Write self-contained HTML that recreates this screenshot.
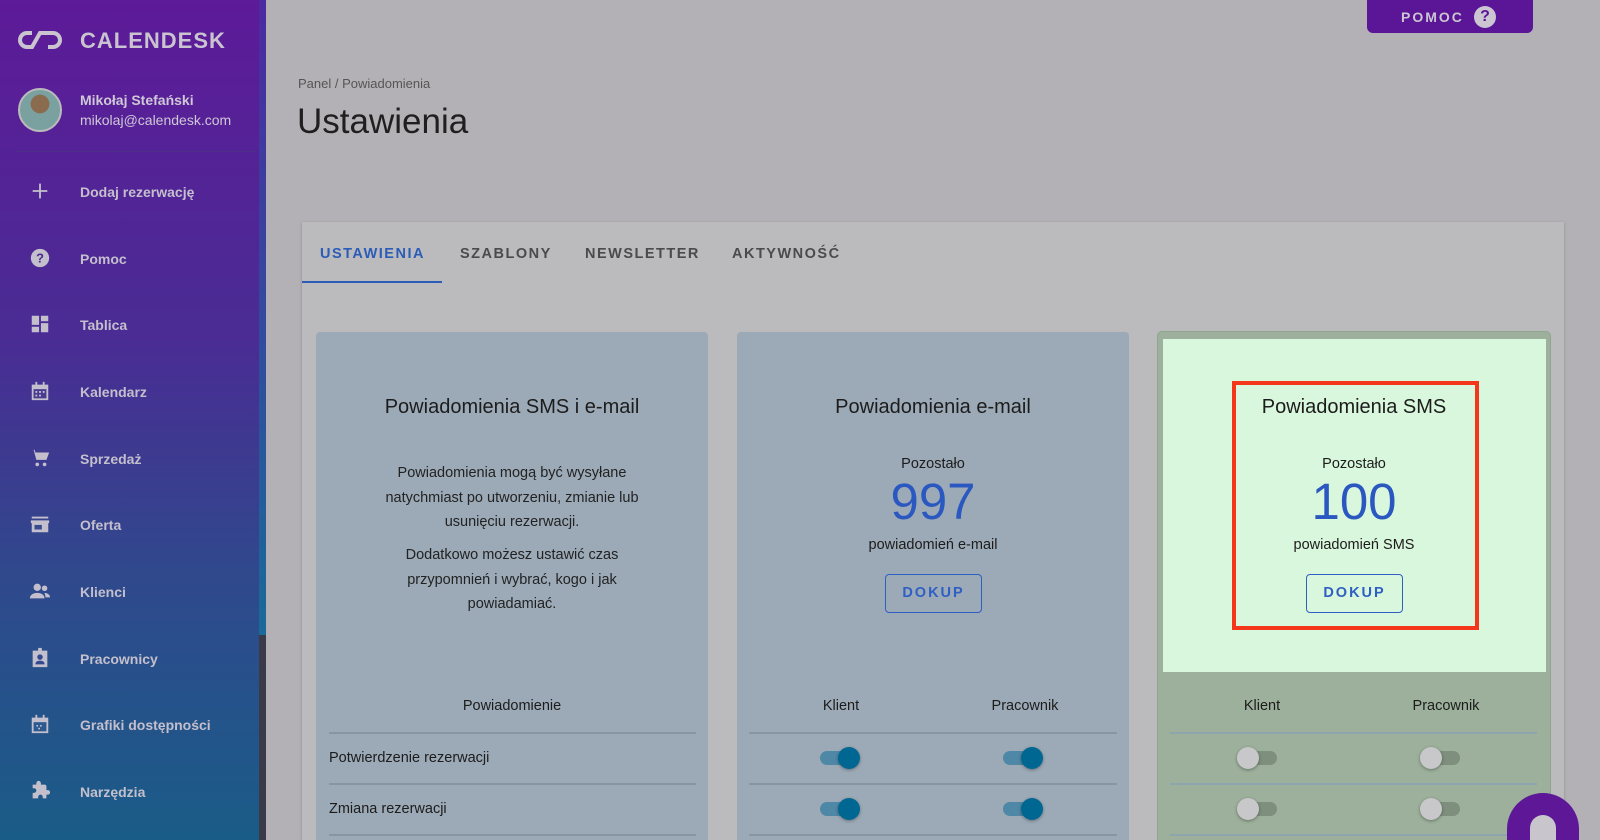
<!DOCTYPE html>
<html style="width:1600px;height:840px;overflow:hidden"><head><meta charset="utf-8"><style>
*{box-sizing:border-box;margin:0;padding:0}
body{width:1600px;height:840px;overflow:hidden;background:#b3b1b5;font-family:"Liberation Sans",sans-serif;position:relative}
.sb{position:absolute;left:0;top:0;width:259px;height:840px;background:linear-gradient(180deg,#5d1a99 0%,#4a2c94 40%,#2e4a8c 70%,#1a5c88 100%)}
.strip{position:absolute;left:259px;top:0;width:7px;height:840px;background:#3a3a48}
.strip i{position:absolute;left:0;top:0;width:7px;height:635px;background:linear-gradient(180deg,#4c2aa0,#1a6a9a)}
.logo{position:absolute;left:80px;top:28px;color:#c9c4cf;font-weight:bold;font-size:22px;letter-spacing:1px}
.av{position:absolute;left:18px;top:88px;width:44px;height:44px;border-radius:50%;background:radial-gradient(circle at 50% 35%,#8a6b4e 0 28%,#7aa0a0 29% 100%);border:2px solid #bbb}
.nm{position:absolute;left:80px;top:92px;color:#cfc8d6;font-size:14px;font-weight:bold}
.em{position:absolute;left:80px;top:112px;color:#cfc8d6;font-size:14px}
.hr{position:absolute;left:16px;top:151px;width:240px;height:1px;background:#4e2f86}
.mi{position:absolute;left:80px;color:#c4bfcc;font-size:14px;font-weight:bold}
.ic{position:absolute;left:29px;width:22px;height:22px}
.pom{position:absolute;left:1367px;top:0;width:166px;height:33px;background:#5a1696;border-radius:0 0 6px 6px;color:#cbc6d2;font-weight:bold;font-size:14px;letter-spacing:2px;padding:9px 0 0 34px}
.pom b{position:absolute;left:107px;top:6px;width:22px;height:22px;border-radius:50%;background:#cbc6d2;color:#5a1696;font-size:16px;text-align:center;line-height:22px;letter-spacing:0}
.bc{position:absolute;left:298px;top:76px;font-size:13px;color:#555}
.tt{position:absolute;left:297px;top:102px;font-size:35px;color:#1f1f1f}
.box{position:absolute;left:302px;top:222px;width:1262px;height:618px;background:#bbbabd;box-shadow:0 1px 3px rgba(0,0,0,.2)}
.tab{position:absolute;top:246px;font-size:14.5px;font-weight:bold;letter-spacing:1.5px;color:#4b4b4f}
.ul{position:absolute;left:302px;top:281px;width:140px;height:2px;background:#2a5cb8}
.card{position:absolute;top:332px;width:392px;height:508px;background:#9caab7;border-radius:4px 4px 0 0}
.c{position:absolute;text-align:center;color:#1c1c1c}
.h{font-size:20px}
.p{font-size:14.5px;line-height:24.5px;color:#222}
.big{font-size:51px;color:#2a58c0}
.btn{position:absolute;width:97px;height:39px;border:1.5px solid #2f5fc4;border-radius:4px;color:#2f5fc4;font-weight:bold;font-size:14.5px;letter-spacing:2px;text-align:center;line-height:37px}
.line{position:absolute;height:2px;background:#8896a4}
.tg{position:absolute;width:42px;height:16px}
.tg i{position:absolute;left:2px;top:1px;width:38px;height:14px;border-radius:7px}
.tg b{position:absolute;top:-3px;width:22px;height:22px;border-radius:50%;box-shadow:0 1px 3px rgba(0,0,0,.35)}
.on i{background:#4f88a6}.on b{left:20px;background:#006792}
.off i{background:#7e8f7d}.off b{left:0;background:#c8c8ca}
</style></head><body>
<div class="sb"></div><div class="strip"><i></i></div>
<svg style="position:absolute;left:18px;top:30px" width="44" height="20" viewBox="0 0 44 20"><path d="M14 3H9a7 7 0 0 0 0 14h5l8-14h13a7 7 0 0 1 0 14h-5" fill="none" stroke="#c9c4cf" stroke-width="4"/></svg>
<div class="logo">CALENDESK</div>
<div class="av"></div>
<div class="nm">Mikołaj Stefański</div><div class="em">mikolaj@calendesk.com</div>
<div class="hr"></div>
<div class="mi" style="top:184px">Dodaj rezerwację</div>
<div class="mi" style="top:251px">Pomoc</div>
<div class="mi" style="top:317px">Tablica</div>
<div class="mi" style="top:384px">Kalendarz</div>
<div class="mi" style="top:451px">Sprzedaż</div>
<div class="mi" style="top:517px">Oferta</div>
<div class="mi" style="top:584px">Klienci</div>
<div class="mi" style="top:651px">Pracownicy</div>
<div class="mi" style="top:717px">Grafiki dostępności</div>
<div class="mi" style="top:784px">Narzędzia</div>
<svg class="ic" style="top:180px" viewBox="0 0 24 24"><path d="M12 4v16M4 12h16" stroke="#c4bfcc" stroke-width="2"/></svg>
<svg class="ic" style="top:247px" viewBox="0 0 24 24"><circle cx="12" cy="12" r="10" fill="#c4bfcc"/><text x="12" y="17" font-size="14" font-weight="bold" text-anchor="middle" fill="#4a2a90" font-family="Liberation Sans">?</text></svg>
<svg class="ic" style="top:313px" viewBox="0 0 24 24" fill="#c4bfcc"><path d="M3 3h8v10H3zM13 3h8v6h-8zM13 11h8v10h-8zM3 15h8v6H3z"/></svg>
<svg class="ic" style="top:380px" viewBox="0 0 24 24" fill="#c4bfcc"><path d="M3 5h18v17H3zM7 2h2v4H7zM15 2h2v4h-2z"/><path d="M5 10h14v10H5z" fill="#4a3a90"/><path d="M7 12h2v2H7zM11 12h2v2h-2zM15 12h2v2h-2zM7 16h2v2H7zM11 16h2v2h-2z"/></svg>
<svg class="ic" style="top:447px" viewBox="0 0 24 24" fill="#c4bfcc"><path d="M1 3h4l3 11h11l3-8H7L6 3z"/><circle cx="9" cy="19" r="2"/><circle cx="17" cy="19" r="2"/></svg>
<svg class="ic" style="top:513px" viewBox="0 0 24 24" fill="#c4bfcc"><path d="M3 4h18v2H3zM2 8h20v3H2zM3 11h18v10H3z"/><path d="M6 13h8v5H6z" fill="#3a4a90"/></svg>
<svg class="ic" style="top:580px" viewBox="0 0 24 24" fill="#c4bfcc"><circle cx="9" cy="8" r="4"/><circle cx="17" cy="9" r="3"/><path d="M1 20c0-4 4-6 8-6s8 2 8 6zM17 14c3 0 6 2 6 5h-5c0-2-1-4-1-5z"/></svg>
<svg class="ic" style="top:647px" viewBox="0 0 24 24" fill="#c4bfcc"><path d="M4 4h16v18H4z"/><circle cx="12" cy="11" r="3" fill="#344890"/><path d="M7 19c0-3 2-4 5-4s5 1 5 4z" fill="#344890"/><path d="M10 1h4v5h-4z"/></svg>
<svg class="ic" style="top:713px" viewBox="0 0 24 24" fill="#c4bfcc"><path d="M3 5h18v17H3zM7 2h2v4H7zM15 2h2v4h-2z"/><path d="M5 10h14v10H5z" fill="#2a5a90"/><circle cx="9" cy="14" r="1"/><circle cx="13" cy="14" r="1"/><circle cx="11" cy="17" r="1"/></svg>
<svg class="ic" style="top:780px" viewBox="0 0 24 24" fill="#c4bfcc"><path d="M20.5 11H19V7a2 2 0 0 0-2-2h-4V3.5a2.5 2.5 0 0 0-5 0V5H4v4h1.5a2.5 2.5 0 0 1 0 5H4v6h6v-1.5a2.5 2.5 0 0 1 5 0V20h4v-4h1.5a2.5 2.5 0 0 0 0-5z"/></svg>

<div class="pom">POMOC<b>?</b></div>
<div class="bc">Panel / Powiadomienia</div>
<div class="tt">Ustawienia</div>
<div class="box"></div>
<div class="tab" style="left:320px;color:#2a5cb8">USTAWIENIA</div>
<div class="tab" style="left:460px">SZABLONY</div>
<div class="tab" style="left:585px">NEWSLETTER</div>
<div class="tab" style="left:732px">AKTYWNOŚĆ</div>
<div class="ul"></div>

<div class="card" style="left:316px"></div>
<div class="card" style="left:737px"></div>
<div class="card" style="left:1158px;background:#9cb09b;box-shadow:0 0 0 1px #8fa58f"></div>
<div style="position:absolute;left:1163px;top:339px;width:383px;height:333px;background:#d9f7dc"></div>

<div class="c h" style="left:316px;width:392px;top:396px">Powiadomienia SMS i e-mail</div>
<div class="c p" style="left:316px;width:392px;top:461px">Powiadomienia mogą być wysyłane<br>natychmiast po utworzeniu, zmianie lub<br>usunięciu rezerwacji.</div>
<div class="c p" style="left:316px;width:392px;top:543px">Dodatkowo możesz ustawić czas<br>przypomnień i wybrać, kogo i jak<br>powiadamiać.</div>

<div class="c h" style="left:737px;width:392px;top:396px">Powiadomienia e-mail</div>
<div class="c" style="left:737px;width:392px;top:456px;font-size:14.5px">Pozostało</div>
<div class="c big" style="left:737px;width:392px;top:472px">997</div>
<div class="c" style="left:737px;width:392px;top:537px;font-size:14.5px">powiadomień e-mail</div>
<div class="btn" style="left:885px;top:574px">DOKUP</div>

<div class="c h" style="left:1158px;width:392px;top:396px">Powiadomienia SMS</div>
<div class="c" style="left:1158px;width:392px;top:456px;font-size:14.5px">Pozostało</div>
<div class="c big" style="left:1158px;width:392px;top:472px">100</div>
<div class="c" style="left:1158px;width:392px;top:537px;font-size:14.5px">powiadomień SMS</div>
<div class="btn" style="left:1306px;top:574px">DOKUP</div>
<div style="position:absolute;left:1232px;top:381px;width:247px;height:249px;border:4px solid #f4361a"></div>

<div class="c" style="left:316px;width:392px;top:698px;font-size:14.5px">Powiadomienie</div>
<div class="c" style="left:741px;width:200px;top:698px;font-size:14.5px">Klient</div>
<div class="c" style="left:925px;width:200px;top:698px;font-size:14.5px">Pracownik</div>
<div class="c" style="left:1162px;width:200px;top:698px;font-size:14.5px">Klient</div>
<div class="c" style="left:1346px;width:200px;top:698px;font-size:14.5px">Pracownik</div>
<div class="c" style="left:329px;top:750px;font-size:14.5px;text-align:left">Potwierdzenie rezerwacji</div>
<div class="c" style="left:329px;top:801px;font-size:14.5px;text-align:left">Zmiana rezerwacji</div>
<div class="line" style="left:329px;width:367px;top:732px"></div>
<div class="line" style="left:329px;width:367px;top:783px"></div>
<div class="line" style="left:329px;width:367px;top:834px"></div>
<div class="line" style="left:749px;width:368px;top:732px"></div>
<div class="line" style="left:749px;width:368px;top:783px"></div>
<div class="line" style="left:749px;width:368px;top:834px"></div>
<div class="line" style="left:1170px;width:367px;top:732px;background:#8ea4ae"></div>
<div class="line" style="left:1170px;width:367px;top:783px;background:#8ea4ae"></div>
<div class="line" style="left:1170px;width:367px;top:834px;background:#8ea4ae"></div>

<div class="tg on" style="left:818px;top:750px"><i></i><b></b></div>
<div class="tg on" style="left:1001px;top:750px"><i></i><b></b></div>
<div class="tg on" style="left:818px;top:801px"><i></i><b></b></div>
<div class="tg on" style="left:1001px;top:801px"><i></i><b></b></div>
<div class="tg off" style="left:1237px;top:750px"><i></i><b></b></div>
<div class="tg off" style="left:1420px;top:750px"><i></i><b></b></div>
<div class="tg off" style="left:1237px;top:801px"><i></i><b></b></div>
<div class="tg off" style="left:1420px;top:801px"><i></i><b></b></div>

<div style="position:absolute;left:1507px;top:793px;width:72px;height:47px;border-radius:36px 36px 0 0;background:#5d1797"></div>
<div style="position:absolute;left:1530px;top:815px;width:26px;height:25px;border-radius:13px 13px 0 0;background:#c8c5cc"></div>
</body></html>
